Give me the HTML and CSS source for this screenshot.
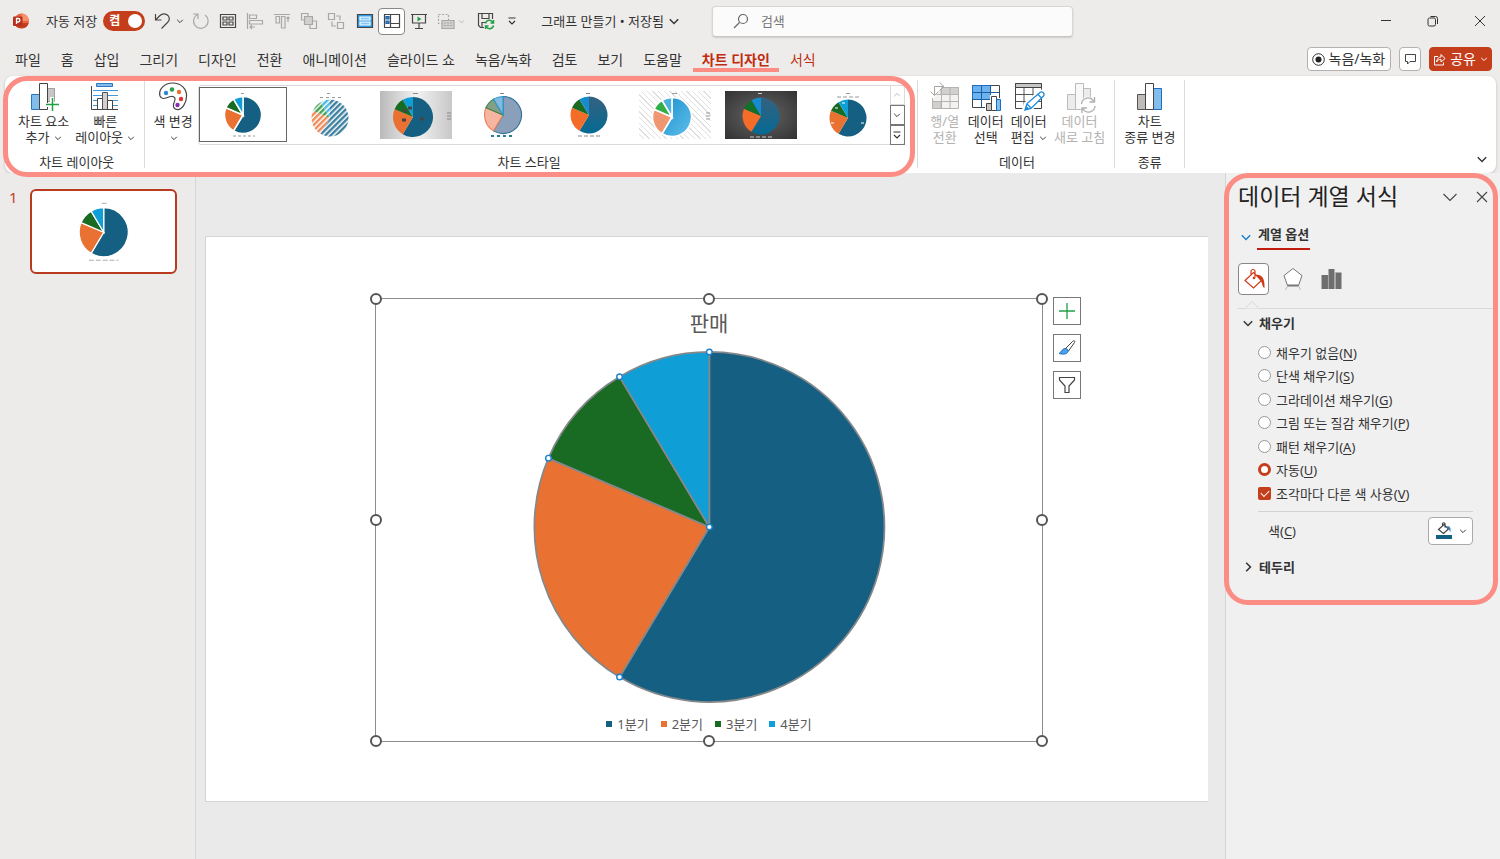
FILE: index.html
```html
<!DOCTYPE html>
<html lang="ko">
<head>
<meta charset="utf-8">
<title>그래프 만들기</title>
<link rel="stylesheet" href="styles.css">
</head>
<body>
<svg class="defs" width="0" height="0" aria-hidden="true">
  <defs>
    <path id="s1" d="M0 0V-100A100 100 0 1 1 -51.3 85.8Z"/>
    <path id="s2" d="M0 0L-51.3 85.8A100 100 0 0 1 -91.95 -39.3Z"/>
    <path id="s3" d="M0 0L-91.95 -39.3A100 100 0 0 1 -51.3 -85.8Z"/>
    <path id="s4" d="M0 0L-51.3 -85.8A100 100 0 0 1 0 -100Z"/>
    <g id="pie"><use href="#s1" fill="#156082"/><use href="#s2" fill="#e97132"/><use href="#s3" fill="#196b24"/><use href="#s4" fill="#0f9ed5"/></g>
    <pattern id="h1" width="21" height="21" patternUnits="userSpaceOnUse" patternTransform="rotate(45)"><rect width="13" height="21" fill="#3d7fa0"/></pattern>
    <pattern id="h2" width="21" height="21" patternUnits="userSpaceOnUse" patternTransform="rotate(45)"><rect width="13" height="21" fill="#f08a58"/></pattern>
    <pattern id="h3" width="21" height="21" patternUnits="userSpaceOnUse" patternTransform="rotate(45)"><rect width="13" height="21" fill="#3fa050"/></pattern>
    <pattern id="h4" width="21" height="21" patternUnits="userSpaceOnUse" patternTransform="rotate(45)"><rect width="13" height="21" fill="#4db8e4"/></pattern>
    <linearGradient id="gb" x1="0" y1="0" x2="1" y2="1"><stop offset="0" stop-color="#1c8fd0"/><stop offset="1" stop-color="#5fc0ea"/></linearGradient>
    <linearGradient id="gd" x1="0" y1="0" x2="0" y2="1"><stop offset="0" stop-color="#36617f"/><stop offset="1" stop-color="#046a94"/></linearGradient>
    <symbol id="chev" viewBox="0 0 10 10"><path d="M1.500 3.500L5 7L8.500 3.500" fill="none" stroke="currentColor" stroke-width="1.200"/></symbol>
  </defs>
</svg>

<header class="titlebar">
  <svg class="logo" width="16" height="16" viewBox="0 0 16 16"><circle cx="8.500" cy="8" r="7.500" fill="#e8623e"/><path d="M8.500 .5A7.500 7.500 0 0 1 16 8H8.500z" fill="#f58f6c"/><path d="M1.500 10.500A7.500 7.500 0 0 0 15.700 10z" fill="#c33b1e"/><rect y="3.500" width="9.500" height="9.500" rx="1" fill="#b7301a"/><path d="M3.500 11V5.500H5.200a1.700 1.700 0 0 1 0 3.500H3.500" fill="none" stroke="#fff" stroke-width="1.300"/></svg>
  <span class="autosave">자동 저장</span>
  <button class="switch" role="switch" aria-checked="true"><span>켬</span><i></i></button>
  <button class="tool undo" aria-label="실행 취소"><svg width="17" height="18" viewBox="0 0 17 18"><path d="M1.500 2v6H7.500M1.500 8L6 3.500C8.500 1 12 1.500 14 3.500C16 6 15.500 8.500 13.500 10.500L7.500 16.500"/></svg></button>
  <button class="drop" aria-label="실행 취소 목록"><svg width="8" height="8"><use href="#chev"/></svg></button>
  <div class="tools">
    <button class="tool dim" aria-label="다시 실행"><svg width="18" height="18" viewBox="0 0 18 18"><path d="M5.500 2.500A7.300 7.300 0 1 0 13 3M6 7V2H1"/></svg></button>
    <button class="tool" aria-label="표"><svg width="18" height="18" viewBox="0 0 18 18"><path d="M1.500 2.500h15v13h-15zM4 5h4v3H4zM10 5h4v3h-4zM4 10h4v3H4zM10 10h4v3h-4z"/></svg></button>
    <button class="tool dim" aria-label="왼쪽 맞춤"><svg width="18" height="18" viewBox="0 0 18 18"><path d="M1.500 1v16M3.500 3h7v3.500h-7zM3.500 8.500h13V12h-13zM4 15h5M6 13L4 15l2 2"/></svg></button>
    <button class="tool dim" aria-label="위쪽 맞춤"><svg width="18" height="18" viewBox="0 0 18 18"><path d="M1 2.500h16M3 4.500h3.500V11H3zM8.500 4.500H12V16H8.500zM15 10V5M13.500 6.500L15 5l1.500 1.500"/></svg></button>
    <button class="tool dim" aria-label="앞으로"><svg width="18" height="18" viewBox="0 0 18 18"><path d="M4.500 4.500h8v8h-8z" fill="#d2d0ce"/><path d="M4 8H1.500V1.500H8V4M13 9h3.500v7.500H10V13"/></svg></button>
    <button class="tool dim" aria-label="뒤로"><svg width="18" height="18" viewBox="0 0 18 18"><path d="M1.500 1.500h6v6h-6zM10.500 10.500h6v6h-6zM9 4h4v4.500M9 14H5V9.500"/></svg></button>
  </div>
  <div class="tools">
    <button class="tool" aria-label="텍스트 상자"><svg width="18" height="18" viewBox="0 0 18 18"><path d="M1.500 2.500h15v13h-15z" fill="#2e9be8"/><path d="M4 5h10v3H4zM4 10h10v3H4z" fill="#8cc8f5" stroke="#fff"/></svg></button>
    <button class="tool on" aria-label="레이아웃"><svg width="18" height="18" viewBox="0 0 18 18"><path d="M1.500 2.500h15v13h-15zM7.500 3v12M7.500 11.500H16" fill="#fff"/><path d="M3 4.500h3V7H3zM3 9h3v2.500H3z" fill="#2b88d8" stroke="#2464a4"/></svg></button>
    <button class="tool" aria-label="슬라이드 쇼"><svg width="18" height="18" viewBox="0 0 18 18"><path d="M1 2.500h16M2.500 2.500v8.500h13V2.500M9 11v5M5 16.500h8"/><path d="M7.500 4.500L11.500 7l-4 2.500z" fill="#21a045" stroke="none"/></svg></button>
    <button class="tool dim" aria-label="선택"><svg width="18" height="18" viewBox="0 0 18 18"><path d="M1.500 2.500h10v9h-10z" stroke-dasharray="2 1.500"/><path d="M5 8.500h12v8H5z" fill="#d2d0ce"/><path d="M7 11h8M7 13.500h8" stroke-dasharray="2 1"/></svg></button>
  </div>
  <button class="drop pale" aria-label="선택 목록"><svg width="7" height="7"><use href="#chev"/></svg></button>
  <button class="tool save" aria-label="저장"><svg width="18" height="18" viewBox="0 0 18 18"><path d="M7 15.500H3.500L1.500 13.500V1.500h14V7M5 1.500v5h7v-5M5 15v-4.500h3"/><path d="M8.500 11.500A4 4 0 0 1 16 10.500M16.500 8v3h-3M16.500 13.500A4 4 0 0 1 9 14.500M8.500 17v-3h3" stroke="#21a045" stroke-width="1.500"/></svg></button>
  <button class="drop more" aria-label="도구 모음 사용자 지정"><svg width="10" height="10" viewBox="0 0 10 10"><path d="M1.500 2h7M2 5l3 3 3-3" fill="none" stroke="currentColor" stroke-width="1.200"/></svg></button>
  <button class="doc">그래프 만들기 • 저장됨 <svg width="12" height="12"><use href="#chev"/></svg></button>
  <label class="search"><svg width="16" height="16" viewBox="0 0 16 16"><circle cx="10" cy="6" r="4.500"/><path d="M6.500 9.500L1 15"/></svg><input type="search" placeholder="검색" aria-label="검색"></label>
  <div class="window">
    <button aria-label="최소화"><svg width="12" height="12" viewBox="0 0 12 12"><path d="M1 5.500h10"/></svg></button>
    <button aria-label="이전 크기로"><svg width="12" height="12" viewBox="0 0 12 12"><rect x="1" y="3" width="7.500" height="8" rx="1.500"/><path d="M3.500 1.500H8.500A2 2 0 0 1 10.500 3.500V9"/></svg></button>
    <button aria-label="닫기"><svg width="12" height="12" viewBox="0 0 12 12"><path d="M1 1l10 10M11 1L1 11"/></svg></button>
  </div>
</header>

<nav class="tabs">
  <button>파일</button><button>홈</button><button>삽입</button><button>그리기</button><button>디자인</button><button>전환</button><button>애니메이션</button><button>슬라이드 쇼</button><button>녹음/녹화</button><button>검토</button><button>보기</button><button>도움말</button><button class="active">차트 디자인</button><button class="context">서식</button>
  <div class="actions">
    <button class="record"><svg width="13" height="13" viewBox="0 0 13 13"><circle cx="6.500" cy="6.500" r="5.800" fill="none" stroke="#333"/><circle cx="6.500" cy="6.500" r="3" fill="#222"/></svg>녹음/녹화</button>
    <button class="comment" aria-label="메모"><svg width="13" height="13" viewBox="0 0 13 13"><path d="M1.500 1.500h10v7H6L3.500 11V8.500h-2z" fill="none" stroke="#444"/></svg></button>
    <button class="share"><svg width="13" height="13" viewBox="0 0 13 13"><path d="M5 3.500H1.500v8.500h9V9.500" fill="none" stroke="#fff"/><path d="M3.500 9C4 5.500 6 4 8 4V1.500L12 5.500 8 9V6.500C6 6.500 4.500 7 3.500 9z" fill="none" stroke="#fff"/></svg>공유<svg class="end" width="8" height="8"><use href="#chev"/></svg></button>
  </div>
</nav>

<section class="ribbon">
  <div class="chart-tools">
    <div class="group layouts">
      <div class="row">
        <button class="big"><svg width="32" height="32" viewBox="0 0 32 32"><path d="M3.500 13.500h8v15h-8z" fill="#83bdec" stroke="#2b78c0"/><path d="M19.500 7.500h7v13h-7z" fill="#c8c6c4" stroke="#a19f9d"/><path d="M11.500 2.500h8v26h-8z" fill="#fff" stroke="#444"/><path d="M24 16v16M17 24h16" stroke="#fff" stroke-width="4"/><path d="M24.500 17v13M18 23.500h13" stroke="#21a045" stroke-width="1.500"/></svg><span>차트 요소<br>추가 <svg width="8" height="8"><use href="#chev"/></svg></span></button>
        <button class="big"><svg width="32" height="32" viewBox="0 0 32 32"><path d="M7.500 2.500h16v3h-16z" fill="#83bdec" stroke="#2b78c0"/><path d="M4 9.500h25M4 14.500h25M4 19.500h25M4 24.500h25" stroke="#3f9be0"/><path d="M8.500 17.500h5v11h-5z" fill="#fff" stroke="#444"/><path d="M13.500 11.500h5v17h-5z" fill="#d2d0ce" stroke="#555"/><path d="M18.500 19.500h5v9h-5z" fill="#fff" stroke="#444"/><path d="M2.500 5v23.500H29" fill="none" stroke="#444"/></svg><span>빠른<br>레이아웃 <svg width="8" height="8"><use href="#chev"/></svg></span></button>
      </div>
      <div class="caption">차트 레이아웃</div>
    </div>
    <div class="group styles">
      <div class="row">
        <button class="big"><svg width="32" height="32" viewBox="0 0 32 32"><path d="M3 15C1 8 8 2 15.500 2C24 2 30 8 29.500 15.500C29.500 22 25 29 20 28.500C16 28 15.500 24 17.500 20.500C19 17.500 17.500 15 14 15.500C10 16 5 20 3 15z" fill="#fff" stroke="#444" stroke-width="1.200"/><circle cx="9" cy="12" r="2.200" fill="#2b88d8"/><circle cx="15" cy="8.500" r="2.200" fill="#21a045"/><circle cx="22" cy="11" r="2.200" fill="#e97132"/><circle cx="24" cy="18" r="2.200" fill="#e83030"/><circle cx="20.500" cy="24" r="2.200" fill="#8a2bb0"/></svg><span>색 변경<br><svg width="8" height="8"><use href="#chev"/></svg></span></button>
        <div class="gallery">
          <button class="style selected" aria-label="스타일 1"><svg viewBox="-36 -24 72 48"><g stroke="#fff" stroke-width="8"><use href="#pie" transform="scale(.185)"/></g><path d="M-2-21.500h5M-10 21h22" stroke="#999" stroke-dasharray="3 2"/></svg></button>
          <button class="style" aria-label="스타일 2"><svg viewBox="-36 -24 72 48"><g transform="translate(0 3) scale(.185)"><use href="#s1" fill="url(#h1)"/><use href="#s2" fill="url(#h2)"/><use href="#s3" fill="url(#h3)"/><use href="#s4" fill="url(#h4)"/></g><path d="M-3-21.500h5M-10-17.500h22" stroke="#999" stroke-dasharray="3 3"/></svg></button>
          <button class="style silver" aria-label="스타일 3"><svg viewBox="-36 -24 72 48"><use href="#pie" transform="translate(-3 2) scale(.2)"/><path d="M-3-21.500h5M31-2h4M31 1h4M31 4h4" stroke="#888"/><path d="M-14 5h4M-13-4h4M-8-7h4M4 4h4" stroke="#444" stroke-width="3"/></svg></button>
          <button class="style" aria-label="스타일 4"><svg viewBox="-36 -24 72 48"><g transform="scale(.185)" stroke-width="6"><use href="#s1" fill="#8a9fb9" stroke="#2e7099"/><use href="#s2" fill="#f5b5a0" stroke="#e9835a"/><use href="#s3" fill="#859f86" stroke="#39834a"/><use href="#s4" fill="#84bae0" stroke="#2a9bd0"/></g><path d="M-3-21.500h4" stroke="#888"/><path d="M-12 21h22" stroke="#258090" stroke-width="2" stroke-dasharray="3 3"/></svg></button>
          <button class="style" aria-label="스타일 5"><svg viewBox="-36 -24 72 48"><g transform="scale(.185)"><use href="#s1" fill="url(#gd)"/><use href="#s2" fill="#f36c28"/><use href="#s3" fill="#196b24"/><use href="#s4" fill="#168bd0"/></g><path d="M-3-21.500h5M-11 21h22" stroke="#888" stroke-dasharray="4 2"/></svg></button>
          <button class="style hatch" aria-label="스타일 6"><svg viewBox="-36 -24 72 48"><g transform="translate(-3 2) scale(.195)" stroke="#fff" stroke-width="8"><use href="#s1" fill="url(#gb)"/><use href="#s2" fill="#f09772"/><use href="#s3" fill="#32ae48"/><use href="#s4" fill="#4cb0df"/></g><path d="M-3-21.500h5M31-2h4M31 1h4M31 4h4" stroke="#999"/></svg></button>
          <button class="style dark" aria-label="스타일 7"><svg viewBox="-36 -24 72 48"><g transform="translate(0 1) scale(.185)"><use href="#s1" fill="url(#gd)"/><use href="#s2" fill="#f36c28"/><use href="#s3" fill="#12702a"/><use href="#s4" fill="#168bd0"/></g><path d="M-3-21.500h5M-11 22h22" stroke="#ccc" stroke-dasharray="4 2"/></svg></button>
          <button class="style" aria-label="스타일 8"><svg viewBox="-36 -24 72 48"><use href="#pie" transform="translate(0 3) scale(.185)"/><path d="M-2-21.500h5M-11-18h22" stroke="#999" stroke-dasharray="4 2"/><path d="M-17 8h3M-13-7h3M-6-12h3M13 8h3" stroke="#fff"/></svg></button>
          <div class="scroll"><button aria-label="위로" disabled><svg width="8" height="8" viewBox="0 0 10 10"><path d="M1.500 6.500L5 3L8.500 6.500" fill="none" stroke="currentColor"/></svg></button><button aria-label="아래로"><svg width="8" height="8"><use href="#chev"/></svg></button><button aria-label="자세히"><svg width="10" height="10" viewBox="0 0 10 10"><path d="M1.500 2h7M2 5l3 3 3-3" fill="none" stroke="currentColor" stroke-width="1.200"/></svg></button></div>
        </div>
      </div>
      <div class="caption">차트 스타일</div>
    </div>
  </div>
  <div class="group data">
    <div class="row">
      <button class="big" disabled><svg width="32" height="32" viewBox="0 0 32 32"><g stroke="#b5b3b1"><path d="M3.500 6.500h26v21h-26z" fill="#f3f2f1"/><path d="M12 6.500h17.500v7H12zM3.500 20.500H12v7H3.500z" fill="#d2d0ce"/><path d="M3 13.500h27M3 20.500h27M12.500 6.500v21M21 6.500v21" fill="none"/></g><path d="M0 0h17L5 17H0z" fill="#fff"/><path d="M14.500 5.500H5.500v9M10.500 1.500l4.500 4-4.500 4M1.500 10.500l4 4 4-4" fill="none" stroke="#a8a6a4"/></svg><span>행/열<br>전환</span></button>
      <button class="big"><svg width="32" height="32" viewBox="0 0 32 32"><path d="M2.500 4.500h27v22h-27z" fill="#fff" stroke="#444"/><path d="M2.500 4.500h18v14h-18z" fill="#6bb2ee" stroke="#1b6ec2"/><path d="M2.500 11.500h27M2.500 18.500h27M11.500 4.500v22M20.500 4.500v22" fill="none" stroke="#1b5fa0"/><path d="M20 14h8v3h4v15H15V21h5z" fill="#fff"/><path d="M16.500 22.500h5v7h-5z" fill="#c8c6c4" stroke="#444"/><path d="M21.500 15.500h5v14h-5z" fill="#fff" stroke="#444"/><path d="M26.500 18.500h4v11h-4z" fill="#83bdec" stroke="#1b6ec2"/></svg><span>데이터<br>선택</span></button>
      <button class="big"><svg width="32" height="32" viewBox="0 0 32 32"><path d="M2.500 2.500h26v25h-26z" fill="#fff" stroke="#444"/><path d="M2.500 2.500h26v4h-26z" fill="#c8c6c4" stroke="#444"/><path d="M3 13.500h25M3 20.500h25M11 7v20M20 7v20" stroke="#555"/><path d="M32 10L18 32H8l3-10L27 8z" fill="#fff"/><path d="M12 29l2-6.500L27 11.500a2.500 2.500 0 0 1 3.500 3.500L18 27.500zM14 23l4 4M25 13.500l4 4" fill="#fff" stroke="#1f8ad8" stroke-width="1.300"/><path d="M12 29l1.500-4 2.500 2.500z" fill="#1f8ad8"/></svg><span>데이터<br>편집 <svg width="8" height="8"><use href="#chev"/></svg></span></button>
      <button class="big" disabled><svg width="32" height="32" viewBox="0 0 32 32"><path d="M3.500 13.500h8v15h-8zM18.500 7.500h8v21h-8z" fill="#ececec" stroke="#bbb"/><path d="M11.500 2.500h8v26h-8z" fill="#f8f8f8" stroke="#bbb"/><circle cx="24" cy="24" r="8.500" fill="#fff"/><path d="M17.500 23a6.500 6.500 0 0 1 12-3M30.500 16v5h-5M31 25a6.500 6.500 0 0 1-12 3M18 32v-5h5" fill="none" stroke="#b0b0b0" stroke-width="1.400"/></svg><span>데이터<br>새로 고침</span></button>
    </div>
    <div class="caption">데이터</div>
  </div>
  <div class="group kind">
    <div class="row">
      <button class="big"><svg width="32" height="32" viewBox="0 0 32 32"><path d="M3.500 13.500h8v15h-8z" fill="#bebbb8" stroke="#555"/><path d="M19.500 7.500h8v21h-8z" fill="#83bdec" stroke="#1b6ec2"/><path d="M11.500 2.500h8v26h-8z" fill="#fff" stroke="#444"/></svg><span>차트<br>종류 변경</span></button>
    </div>
    <div class="caption">종류</div>
  </div>
  <button class="collapse" aria-label="리본 축소"><svg width="12" height="12"><use href="#chev"/></svg></button>
</section>

<main class="workspace">
  <aside class="thumbs">
    <span class="num">1</span>
    <button class="thumb" aria-label="슬라이드 1"><svg viewBox="-73 -41 146 82"><g stroke="#fff" stroke-width="5"><use href="#pie" transform="translate(0 1) scale(.25)"/></g><path d="M-2-28.500h5M-15 29.500h30" stroke="#aaa" stroke-dasharray="5 2"/></svg></button>
  </aside>

  <section class="stage">
    <div class="slide">
      <div class="chart">
        <h2>판매</h2>
        <svg class="pie" viewBox="-104 -104 208 208">
          <g stroke="#85888a" stroke-width="1"><use href="#pie"/></g>
          <g fill="#fff" stroke="#1b7fd0" stroke-width=".8"><circle r="1.600"/><circle cy="-100" r="1.600"/><circle cx="-51.300" cy="-85.800" r="1.600"/><circle cx="-91.950" cy="-39.300" r="1.600"/><circle cx="-51.300" cy="85.800" r="1.600"/></g>
        </svg>
        <ul class="legend"><li class="q1">1분기</li><li class="q2">2분기</li><li class="q3">3분기</li><li class="q4">4분기</li></ul>
        <i class="handle l t"></i><i class="handle c t"></i><i class="handle r t"></i><i class="handle l m"></i><i class="handle r m"></i><i class="handle l b"></i><i class="handle c b"></i><i class="handle r b"></i>
        <div class="side">
          <button aria-label="차트 요소"><svg width="18" height="18" viewBox="0 0 18 18"><path d="M9 1v16M1 9h16" stroke="#21a045" stroke-width="1.300"/></svg></button>
          <button aria-label="차트 스타일"><svg width="18" height="18" viewBox="0 0 18 18"><path d="M7.500 9.500L14.500 2.500C16 1 17.500 2 16.500 3.500L10.500 12z" fill="#fff" stroke="#444"/><path d="M7 9.500C8.500 9 10.500 11 10 12.500C9 15.500 5 15.500 1 14.500C3.500 13.500 3.500 10 7 9.500z" fill="#4ba3ea" stroke="#1b6ec2"/></svg></button>
          <button aria-label="차트 필터"><svg width="18" height="18" viewBox="0 0 18 18"><path d="M1.500 1.500h15v2.500L11 10v6.500H7V10L1.500 4z" fill="none" stroke="#444" stroke-width="1.200"/></svg></button>
        </div>
      </div>
    </div>
  </section>

  <aside class="pane">
    <div class="format">
      <div class="head"><h1>데이터 계열 서식</h1><button aria-label="작업창 옵션"><svg width="16" height="16" viewBox="0 0 16 16"><path d="M1.500 5L8 11.500 14.500 5"/></svg></button><button aria-label="닫기"><svg width="12" height="12" viewBox="0 0 12 12"><path d="M1 1l10 10M11 1L1 11"/></svg></button></div>
      <button class="options"><svg width="12" height="12"><use href="#chev"/></svg><span>계열 옵션</span></button>
      <div class="kinds">
        <button class="on" aria-label="채우기 및 선"><svg width="24" height="24" viewBox="0 0 24 24"><path d="M3 13.500L11.500 5.500l8 8-8 7.500zM9 8.500V4.500a2 2 0 0 1 4 0v6" fill="none" stroke="#d03a18" stroke-width="1.200"/><circle cx="12" cy="11" r="1.300" fill="#d03a18"/><path d="M14 8c6-1 9 4 8.500 13-2.500-1-1.500-4-4-7.500z" fill="#d03a18"/></svg></button>
        <button aria-label="효과"><svg width="24" height="24" viewBox="0 0 24 24"><path d="M12 1.500l9 7-3.500 10h-11L3 8.500z" fill="#fff" stroke="#777"/><path d="M6.500 18.500h11" stroke="#777" stroke-width="2"/><path d="M6.500 19l-2 4M17.500 19l2 4" stroke="#bbb"/></svg></button>
        <button aria-label="계열 옵션"><svg width="24" height="24" viewBox="0 0 24 24"><path d="M1.500 8H8v14H1.500zM8.500 2h6v20h-6zM15.500 5.500h6V22h-6z" fill="#6e6e6e"/><path d="M8.300 8v14M15 5v17" stroke="#999" stroke-width=".6"/></svg></button>
      </div>
      <svg class="notch" width="14" height="8" viewBox="0 0 14 8"><path d="M0 7.500L7 .5l7 7" fill="#f0f0f0" stroke="#d8d8d8"/></svg>
      <button class="section"><svg width="12" height="12"><use href="#chev"/></svg>채우기</button>
      <div class="fills">
        <label><input type="radio" name="fill"><span>채우기 없음(<u>N</u>)</span></label>
        <label><input type="radio" name="fill"><span>단색 채우기(<u>S</u>)</span></label>
        <label><input type="radio" name="fill"><span>그라데이션 채우기(<u>G</u>)</span></label>
        <label><input type="radio" name="fill"><span>그림 또는 질감 채우기(<u>P</u>)</span></label>
        <label><input type="radio" name="fill"><span>패턴 채우기(<u>A</u>)</span></label>
        <label><input type="radio" name="fill" checked><span>자동(<u>U</u>)</span></label>
        <label><input type="checkbox" checked><span>조각마다 다른 색 사용(<u>V</u>)</span></label>
      </div>
      <div class="color"><label for="color">색(<u>C</u>)</label><button id="color"><svg width="18" height="18" viewBox="0 0 18 18"><path d="M3.500 7.500L9 2.500l4.500 4.500L8.500 11.500zM7.500 4.500V2a1.200 1.200 0 0 1 2.500 0V5.500" fill="none" stroke="#444" stroke-width="1.200"/><path d="M12 4c3 0 4 2 3.500 6-1.500-1-1-3-2-4z" fill="#1b7fd0"/><path d="M1 13h16v4H1z" fill="#156082"/></svg><svg width="8" height="8"><use href="#chev"/></svg></button></div>
      <button class="section"><svg width="12" height="12" viewBox="0 0 10 10"><path d="M3.500 1.500L7 5L3.500 8.500" fill="none" stroke="currentColor" stroke-width="1.300"/></svg>테두리</button>
    </div>
  </aside>
</main>
</body>
</html>
```

FILE: styles.css
```css
* { box-sizing: border-box; }
body {
  margin: 0;
  min-height: 100vh;
  display: flex;
  flex-direction: column;
  background: #eeecea;
  color: #333;
  font: 13px/16px "Noto Sans", "Noto Sans CJK KR", sans-serif;
}
button, input { font: inherit; color: inherit; }
button { margin: 0; padding: 0; border: 0; background: none; white-space: nowrap; }
h1, h2 { margin: 0; font-weight: 400; }
.defs { position: absolute; }

/* title bar */
.titlebar { display: flex; align-items: center; height: 42px; padding: 0 1px 0 13px; }
.titlebar svg { flex: none; }
.autosave { margin: 0 6px 0 17px; white-space: nowrap; }
.switch { display: flex; align-items: center; justify-content: space-between; width: 42px; height: 20px; padding: 0 3px 0 6px; border-radius: 10px; background: #c43e1c; color: #fff; font-size: 12px; font-weight: 700; }
.switch i { width: 14px; height: 14px; border-radius: 50%; background: #fff; }
.tools { display: flex; }
.tools + .tools { margin-left: 2px; }
.tool { display: grid; place-items: center; width: 27px; height: 27px; }
.tool svg { fill: none; stroke: #484644; stroke-width: 1.2; }
.tool.dim svg { stroke: #a9a7a5; }
.tool.on { border: 1px solid #8a8886; border-radius: 4px; background: #fff; }
.undo { margin-left: 4px; }
.drop { display: grid; place-items: center; width: 10px; height: 20px; margin-right: 3px; }
.undo + .drop { margin: 0 2px 0 -1px; }
.pale { margin: 0 4px 0 -3px; width: 10px; color: #b0aeac; }
.save { margin-left: 2px; }
.more { margin: 0 24px 0 8px; }
.doc { display: flex; align-items: center; gap: 4px; }
.search { display: flex; align-items: center; gap: 12px; flex: 0 1 361px; height: 31px; margin-left: 32px; padding: 0 20px; border: 1px solid #d8d6d4; border-bottom-color: #c8c6c4; border-radius: 4px; background: #fbfbfb; box-shadow: 0 1px 2px #0002; }
.search svg { fill: none; stroke: #666; stroke-width: 1.2; }
.search input { flex: 1; min-width: 0; padding: 0; border: 0; outline: 0; background: none; }
.search input::placeholder { color: #777; opacity: 1; }
.window { display: flex; gap: 9px; margin-left: auto; }
.window button { display: grid; place-items: center; width: 38px; height: 32px; }
.window svg { fill: none; stroke: #333; }

/* ribbon tabs */
.tabs { display: flex; align-items: center; gap: 2px; height: 34px; padding: 0 8px 0 6px; font-size: 14px; }
.tabs > button { position: relative; height: 32px; padding: 2px 9px 0; }
.tabs .active, .tabs .context { color: #c02c10; }
.tabs .active { font-weight: 700; }
.tabs .active::after { content: ""; position: absolute; left: 0; right: 0; bottom: 3px; height: 4px; background: #fb8d84; }
.actions { display: flex; gap: 8px; margin-left: auto; }
.actions button { display: flex; align-items: center; justify-content: center; gap: 4px; height: 24px; border: 1px solid #b3b0ad; border-radius: 4px; background: #fff; }
.actions .record { padding: 0 5px 0 4px; }
.comment { width: 22px; }
.actions .share { padding: 0 3px; border-color: #c43e1c; background: #c43e1c; color: #fff; }

/* ribbon */
.ribbon { display: flex; height: 97px; margin: 0 4px 0 5px; border-radius: 8px; background: #fff; box-shadow: 0 1px 3px #0003; }
.chart-tools { position: relative; z-index: 2; display: flex; margin-right: 2px; }
.chart-tools::after { content: ""; position: absolute; inset: 0 0 -4px -2px; border: 5px solid #fb8d84; border-radius: 24px; pointer-events: none; }
.group { position: relative; display: flex; flex-direction: column; justify-content: space-between; padding: 5px 9px 3px; }
.group + .group::before, .data::before, .kind::after { content: ""; position: absolute; left: 0; top: 4px; bottom: 5px; width: 1px; background: #dddbd9; }
.kind::after { left: auto; right: 0; }
.row { display: flex; }
.big { display: flex; flex-direction: column; align-items: center; }
.big span svg { margin-left: 1px; }
.big:disabled { color: #b3b1af; }
.caption { text-align: center; }
.layouts { padding: 5px 9px 3px 13px; }
.layouts .row { gap: 6px; }
.styles { padding-right: 10px; }
.styles .row { gap: 5px; }
.data .row { gap: 7px; }
.data { padding: 5px 9px 3px 12px; }
.kind { padding: 5px 10px 3px; }
.gallery { display: flex; width: 707px; height: 60px; margin-top: 4px; border: 1px solid #dcdad8; border-radius: 3px; }
.style { flex: 1; display: grid; place-items: center; margin: 1px 0 2px; }
.style svg { width: 72px; height: 48px; }
.selected { border: 1px solid #666; }
.silver svg { background: linear-gradient(90deg, #b9b9b9, #f2f2f2 50%, #c8c8c8); }
.hatch svg { background: repeating-linear-gradient(45deg, #fff 0 3px, #e0e0e0 3px 4px); }
.dark svg { background: radial-gradient(#666, #323232); }
.scroll { display: flex; flex-direction: column; width: 15px; margin: -1px; }
.scroll button { flex: 1; display: grid; place-items: center; border: 1px solid #777; }
.scroll button:disabled { border-color: #dcdad8; color: #aaa; }
.collapse { align-self: flex-end; margin: 0 8px 9px auto; height: 12px; }

/* workspace */
.workspace { flex: 1; display: grid; grid-template-columns: 196px 1fr 275px; }
.thumbs { display: flex; align-items: flex-start; gap: 12px; padding: 16px 18px 0 9px; border-right: 1px solid #d8d6d4; background: #edebe9; }
.num { color: #c43e1c; font-size: 15px; }
.thumb { flex: 1; border: 2px solid #b83b20; border-radius: 6px; background: #fff; overflow: hidden; }
.thumb svg { display: block; width: 100%; }
.stage { display: flex; align-items: center; padding: 6px 17px 0 9px; background: #ebeaea; }
.slide { flex: 1; display: flex; align-items: center; justify-content: center; aspect-ratio: 1003 / 566; padding: 2px 0 0 4px; border: 1px solid #d6d4d2; border-right: 0; background: #fff; }
.chart { position: relative; display: flex; flex-direction: column; align-items: center; justify-content: space-between; width: 67%; height: 79%; padding: 11px 0 8px; border: 1px solid #8c8c8c; color: #595959; }
.chart h2 { font-size: 21px; line-height: 26px; }
.pie { flex: 1; min-height: 0; margin: 9px 0 6px; width: 100%; }
.legend { display: flex; gap: 12px; margin: 0; padding: 0; list-style: none; line-height: 18px; }
.legend li { display: flex; align-items: center; gap: 5px; }
.legend li::before { content: ""; width: 6px; height: 6px; }
.legend .q1::before { background: #156082; }
.legend .q2::before { background: #e97132; }
.legend .q3::before { background: #196b24; }
.legend .q4::before { background: #0f9ed5; }
.handle { position: absolute; width: 12px; height: 12px; margin: -6px; border: 2px solid #555; border-radius: 50%; background: #fff; }
.l { left: 0; } .c { left: 50%; } .r { left: 100%; }
.t { top: 0; } .m { top: 50%; } .b { top: 100%; }
.side { position: absolute; left: 100%; top: 0; display: flex; flex-direction: column; gap: 9px; margin: -2px 0 0 11px; }
.side button { display: grid; place-items: center; width: 28px; height: 28px; border: 1px solid #777; background: #fff; }

/* format pane */
.pane { border-left: 1px solid #d8d6d4; background: #f0f0f0; }
.format { position: relative; height: 432px; padding: 7px 6px 0 12px; }
.format::after { content: ""; position: absolute; z-index: 3; inset: 0 2px 0 -2px; border: 5px solid #fb8d84; border-radius: 24px; pointer-events: none; }
.head { display: flex; align-items: center; gap: 18px; height: 32px; padding-right: 6px; }
.head h1 { flex: 1; color: #222; font-size: 23px; line-height: 32px; white-space: nowrap; }
.head button { display: grid; padding-top: 2px; }
.head svg { fill: none; stroke: #444; stroke-width: 1.1; }
.options { display: flex; align-items: center; gap: 5px; margin: 11px 0 0 2px; font-weight: 700; color: #1b7fd0; }
.options span { padding: 3px 1px 6px; border-bottom: 2px solid #c01c10; color: #333; }
.kinds { display: flex; gap: 8px; margin-top: 13px; }
.kinds button { display: grid; place-items: center; width: 31px; height: 32px; border-radius: 4px; }
.kinds .on { border: 1px solid #8a8886; background: #fff; }
.format > .notch { display: block; position: relative; z-index: 1; margin: 6px 0 -1px 7px; }
.section { display: flex; align-items: center; gap: 5px; font-weight: 700; }
.notch + .section { width: 100%; padding: 6px 0 4px 4px; border-top: 1px solid #d8d8d8; }
.section:last-child { margin: 14px 0 0 4px; }
.fills { display: flex; flex-direction: column; margin: 5px 21px 0 20px; padding-bottom: 6px; border-bottom: 1px solid #d2d2d2; }
.fills label { display: flex; align-items: center; gap: 5px; height: 23px; margin-top: 1px; line-height: 22px; }
.fills label:nth-child(even) { margin-top: 0; }
.fills u, .color u { text-underline-offset: 2px; }
.fills input { appearance: none; width: 13px; height: 13px; margin: 0; border: 1px solid #999; border-radius: 50%; background: #fff; }
.fills input[type="radio"]:checked { border: 3px solid #c43e1c; }
.fills input[type="checkbox"] { border: 0; border-radius: 2px; background: #c43e1c; display: grid; place-items: center; }
.fills input[type="checkbox"]::before { content: ""; width: 7px; height: 4px; margin-bottom: 2px; border: solid #fff; border-width: 0 0 1px 1px; transform: rotate(-45deg); }
.color { display: flex; align-items: center; justify-content: space-between; margin: 5px 21px 0 30px; }
.color button { display: flex; align-items: center; justify-content: center; gap: 6px; width: 45px; height: 28px; border: 1px solid #aaa; border-radius: 4px; background: #fff; }
```
